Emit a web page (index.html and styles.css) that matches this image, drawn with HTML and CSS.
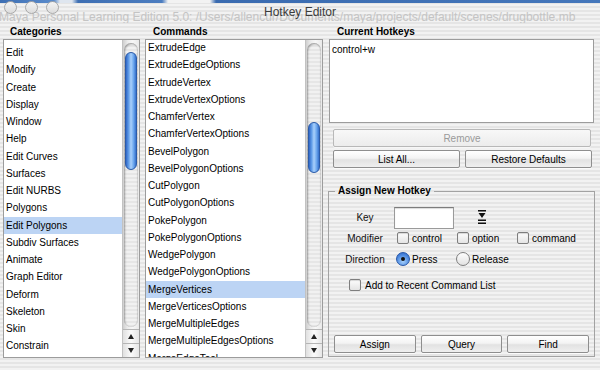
FILE: index.html
```html
<!DOCTYPE html>
<html lang="en">

<head>
    <meta charset="UTF-8">
    <title>Hotkey Editor</title>
    <link rel="stylesheet" href="styles.css">
</head>

<body>
    <div class="window">
        <div class="titlebar">
            <div class="desktop-strip"></div>
            <div class="behind-title">Maya Personal Learning Edition 5.0: /Users/allencur/Documents/maya/projects/default/scenes/drugbottle.mb</div>
            <div class="lights"><span></span><span></span><span></span></div>
            <div class="title">Hotkey Editor</div>
        </div>

        <div class="content">
            <div class="col col-cat">
                <div class="col-head">Categories</div>
                <div class="listbox">
                    <ul class="list">
                        <li>Edit</li>
                        <li>Modify</li>
                        <li>Create</li>
                        <li>Display</li>
                        <li>Window</li>
                        <li>Help</li>
                        <li>Edit Curves</li>
                        <li>Surfaces</li>
                        <li>Edit NURBS</li>
                        <li>Polygons</li>
                        <li class="selected">Edit Polygons</li>
                        <li>Subdiv Surfaces</li>
                        <li>Animate</li>
                        <li>Graph Editor</li>
                        <li>Deform</li>
                        <li>Skeleton</li>
                        <li>Skin</li>
                        <li>Constrain</li>
                    </ul>
                    <div class="vscroll">
                        <div class="groove"><div class="thumb"></div></div>
                        <div class="arrow up"></div>
                        <div class="arrow down"></div>
                    </div>
                </div>
            </div>

            <div class="col col-cmd">
                <div class="col-head">Commands</div>
                <div class="listbox">
                    <ul class="list">
                        <li>ExtrudeEdge</li>
                        <li>ExtrudeEdgeOptions</li>
                        <li>ExtrudeVertex</li>
                        <li>ExtrudeVertexOptions</li>
                        <li>ChamferVertex</li>
                        <li>ChamferVertexOptions</li>
                        <li>BevelPolygon</li>
                        <li>BevelPolygonOptions</li>
                        <li>CutPolygon</li>
                        <li>CutPolygonOptions</li>
                        <li>PokePolygon</li>
                        <li>PokePolygonOptions</li>
                        <li>WedgePolygon</li>
                        <li>WedgePolygonOptions</li>
                        <li class="selected">MergeVertices</li>
                        <li>MergeVerticesOptions</li>
                        <li>MergeMultipleEdges</li>
                        <li>MergeMultipleEdgesOptions</li>
                        <li>MergeEdgeTool</li>
                    </ul>
                    <div class="vscroll">
                        <div class="groove"><div class="thumb"></div></div>
                        <div class="arrow up"></div>
                        <div class="arrow down"></div>
                    </div>
                </div>
            </div>

            <div class="col col-keys">
                <div class="col-head">Current Hotkeys</div>
                <div class="hotkeys">control+w</div>
                <button class="btn btn-wide" disabled>Remove</button>
                <div class="btn-row">
                    <button class="btn">List All...</button>
                    <button class="btn">Restore Defaults</button>
                </div>

                <fieldset class="assign">
                    <legend>Assign New Hotkey</legend>
                    <div class="assign-body">
                        <div class="form-row row-key">
                            <span class="form-label">Key</span>
                            <div class="key-field"></div>
                            <svg class="key-menu" width="8" height="16" viewBox="0 0 8 16">
                                <rect x="0" y="1" width="8" height="1.5" fill="#111" />
                                <polygon points="0.5,4 7.5,4 4,9" fill="#111" />
                                <rect x="0" y="10.5" width="8" height="1.5" fill="#111" />
                                <rect x="0" y="13.5" width="8" height="1.5" fill="#111" />
                            </svg>
                        </div>
                        <div class="form-row row-mod">
                            <span class="form-label">Modifier</span>
                            <label class="opt"><span class="check"></span>control</label>
                            <label class="opt"><span class="check"></span>option</label>
                            <label class="opt"><span class="check"></span>command</label>
                        </div>
                        <div class="form-row row-dir">
                            <span class="form-label">Direction</span>
                            <label class="opt"><span class="radio on"></span>Press</label>
                            <label class="opt"><span class="radio"></span>Release</label>
                        </div>
                        <div class="form-row row-recent">
                            <label class="opt"><span class="check"></span>Add to Recent Command List</label>
                        </div>
                        <div class="btn-row bottom-btns">
                            <button class="btn">Assign</button>
                            <button class="btn">Query</button>
                            <button class="btn">Find</button>
                        </div>
                    </div>
                </fieldset>
            </div>
        </div>
    </div>
</body>

</html>
```

FILE: styles.css
```css
body {
    margin: 0px;
    padding: 0px;
    font-family: "Liberation Sans", Arial, sans-serif;
    font-size: 10px;
    color: #000;
}

.window {
    width: 600px;
    height: 370px;
    overflow: hidden;
    background: repeating-linear-gradient(#f2f2f2 0px, #f2f2f2 2px, #e5e5e5 2px, #e5e5e5 4px);
}

/* title bar */

.titlebar {
    position: relative;
    height: 23px;
    overflow: hidden;
}

.desktop-strip {
    height: 3px;
    background: linear-gradient(to right, #3e6fb3 0%, #5b8ccc 9%, #dfe6ef 10%, #dfe6ef 12%, #3e6fb3 13%, #4c7dc0 27%, #f2f2f2 28%, #f2f2f2 35%, #3a6bb0 36%, #4577bb 100%);
}

.behind-title {
    position: absolute;
    left: -1px;
    top: 10px;
    font-size: 12px;
    line-height: 14px;
    color: #c4c4c4;
    white-space: nowrap;
}

.lights {
    position: absolute;
    left: 4px;
    top: 1px;
    display: flex;
    gap: 8px;
}

.lights span {
    width: 11px;
    height: 11px;
    border: 1px solid #a8a8a8;
    border-radius: 50%;
    background: linear-gradient(#f4f4f4, #dcdcdc);
}

.title {
    position: absolute;
    left: 0px;
    right: 0px;
    top: 5px;
    text-align: center;
    font-size: 12px;
    line-height: 14px;
    color: #3c3c3c;
}

/* main columns */

.content {
    display: flex;
    padding-left: 3px;
}

.col-head {
    height: 16px;
    line-height: 17px;
    font-weight: bold;
    padding-left: 7px;
}

.col-cat {
    width: 137px;
}

.col-cmd {
    width: 178px;
    margin-left: 5px;
}

.col-cmd .col-head {
    padding-left: 8px;
}

.col-keys {
    width: 266px;
    margin-left: 6px;
}

.col-keys .col-head {
    padding-left: 8px;
}

.listbox {
    height: 319px;
    box-sizing: border-box;
    border: 1px solid #9c9c9c;
    background-color: white;
    display: flex;
}

.list {
    flex: 1;
    margin: 0px;
    padding: 4px 0px 0px 0px;
    list-style: none;
    overflow: hidden;
}

.col-cmd .list {
    padding-top: 0px;
}

.col-cmd .list li:first-child {
    margin-top: -1px;
}

.list li {
    height: 17.25px;
    line-height: 17.25px;
    padding-left: 2px;
    white-space: nowrap;
}

.list li.selected {
    background-color: #bcd4f4;
}

/* aqua scrollbar */

.vscroll {
    width: 16px;
    display: flex;
    flex-direction: column;
    border-left: 1px solid #c2c2c2;
    background: linear-gradient(to right, #cfcfcf, #ececec 30%, #f7f7f7 60%, #e9e9e9);
}

.groove {
    flex: 1;
    margin: 3px 1px 2px 1px;
    border-radius: 7px;
    background: repeating-linear-gradient(#f1f1f1 0px, #f1f1f1 2px, #e6e6e6 2px, #e6e6e6 4px);
    box-shadow: inset 1px 1px 2px rgba(0, 0, 0, 0.35), inset -1px 0px 1px rgba(0, 0, 0, 0.12);
}

.thumb {
    width: 12px;
    margin: 9px auto 0px auto;
    height: 118px;
    box-sizing: border-box;
    border: 1px solid #2a5aa8;
    border-radius: 6px;
    background: linear-gradient(to right, #2f66c6 0%, #5e9ae6 25%, #a9d0fb 50%, #6ea8ee 75%, #3570cc 100%);
}

.col-cmd .thumb {
    margin-top: 79px;
    height: 51px;
}

.arrow {
    height: 13px;
    border-top: 1px solid #b5b5b5;
    background: linear-gradient(to right, #e0e0e0, #fbfbfb 50%, #e6e6e6);
    display: flex;
    justify-content: center;
    align-items: center;
}

.arrow::before {
    content: "";
    border-left: 3px solid transparent;
    border-right: 3px solid transparent;
}

.arrow.up::before {
    border-bottom: 5px solid #222;
}

.arrow.down::before {
    border-top: 5px solid #222;
}

/* right panel */

.hotkeys {
    height: 84px;
    width: 265px;
    box-sizing: border-box;
    border: 1px solid #9c9c9c;
    background-color: white;
    padding: 3px 2px;
    line-height: 14px;
}

.btn {
    font-family: "Liberation Sans", Arial, sans-serif;
    font-size: 10px;
    color: #000;
    height: 18px;
    padding: 0px;
    box-sizing: border-box;
    border: 1px solid #8e8e8e;
    border-radius: 2px;
    background: linear-gradient(#ffffff, #f3f3f3 45%, #e2e2e2 55%, #efefef);
    box-shadow: 0 1px 0 rgba(255, 255, 255, 0.7);
}

.btn:disabled {
    color: #9a9a9a;
    border-color: #b8b8b8;
    background: linear-gradient(#f8f8f8, #ececec);
}

.btn-wide {
    display: block;
    width: 258px;
    margin: 6px 0px 0px 4px;
}

.btn-row {
    display: flex;
    gap: 5px;
    margin: 3px 3px 0px 4px;
}

.btn-row .btn {
    flex: 1;
}

/* assign group */

.assign {
    margin: 17px 0px 0px -1px;
    padding: 0px;
    width: 267px;
    box-sizing: border-box;
    border: 1px solid #a2a2a2;
    min-width: 0px;
}

.assign legend {
    font-weight: bold;
    margin-left: 6px;
    padding: 0px 3px;
    line-height: 12px;
}

.assign-body {
    height: 159px;
    display: flex;
    flex-direction: column;
}

.form-row {
    display: flex;
    align-items: center;
    height: 14px;
}

.form-label {
    width: 48px;
    margin-left: 12px;
    margin-right: 7px;
    text-align: center;
    color: #111;
}

.row-key {
    height: 22px;
    margin-top: 10px;
}

.row-key .form-label {
    margin-top: -2px;
}

.key-field {
    width: 60px;
    height: 22px;
    box-sizing: border-box;
    margin-left: -2px;
    border: 1px solid #9a9a9a;
    border-top-color: #7c7c7c;
    background-color: white;
    box-shadow: inset 0 1px 1px rgba(0, 0, 0, 0.15);
}

.key-menu {
    margin-left: 24px;
    margin-top: -3px;
}

.row-mod {
    margin-top: 2px;
}

.row-dir {
    margin-top: 7px;
}

.row-recent {
    margin-top: 12px;
    padding-left: 19px;
}

.row-recent .opt {
    width: auto;
}

.row-recent .check {
    margin-right: 4px;
}

.opt {
    width: 60px;
    display: flex;
    align-items: center;
    white-space: nowrap;
}

.check {
    flex-shrink: 0;
    width: 12px;
    height: 12px;
    box-sizing: border-box;
    margin: 0px 3px 0px 1px;
    border: 1px solid #7e7e7e;
    border-radius: 2px;
    background: linear-gradient(#fdfdfd, #e4e4e4);
    box-shadow: inset 0 1px 1px rgba(0, 0, 0, 0.15);
}

.radio {
    flex-shrink: 0;
    width: 14px;
    height: 14px;
    box-sizing: border-box;
    margin-right: 2px;
    border: 1px solid #7e7e7e;
    border-radius: 50%;
    background: linear-gradient(#fdfdfd, #e2e2e2);
    display: flex;
    justify-content: center;
    align-items: center;
}

.radio.on {
    border-color: #2556a8;
    background: radial-gradient(circle at 50% 70%, #a6d0fb, #4d8ae0 60%, #2c62c0);
}

.radio.on::before {
    content: "";
    width: 4px;
    height: 4px;
    border-radius: 50%;
    background-color: #111;
}

.bottom-btns {
    margin: auto 5px 3px 5px;
}
```
